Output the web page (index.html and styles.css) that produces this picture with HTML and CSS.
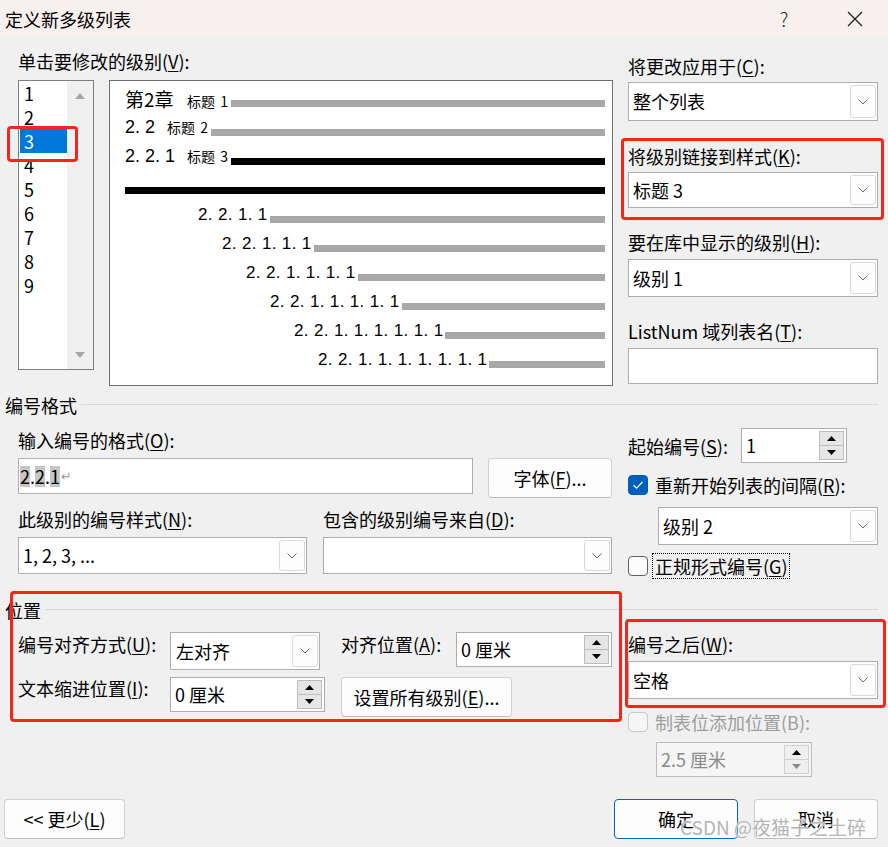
FILE: index.html
```html
<!DOCTYPE html>
<html lang="zh-CN">
<head>
<meta charset="utf-8">
<title>定义新多级列表</title>
<link rel="stylesheet" href="styles.css">
</head>
<body>
<div class="dlg">
  <div class="titlebar">
    <span class="title">定义新多级列表</span>
    <span class="tb-btn help">?</span>
    <span class="tb-btn close"><svg width="16" height="16" viewBox="0 0 16 16"><path d="M1 1 L15 15 M15 1 L1 15" stroke="#1a1a1a" stroke-width="1.2" fill="none"/></svg></span>
  </div>

  <div class="top">
    <div class="col-left">
      <div class="lbl l-top">单击要修改的级别(<u>V</u>):</div>
      <div class="top-row">
        <div class="levels">
          <ul class="lv-items">
            <li>1</li><li>2</li><li class="sel">3</li><li>4</li><li>5</li><li>6</li><li>7</li><li>8</li><li>9</li>
          </ul>
          <div class="lv-scroll">
            <svg class="sc-up" width="10" height="6" viewBox="0 0 10 6"><path d="M0 6 L5 0 L10 6Z" fill="#a6a6a6"/></svg>
            <svg class="sc-down" width="10" height="6" viewBox="0 0 10 6"><path d="M0 0 L5 6 L10 0Z" fill="#a6a6a6"/></svg>
          </div>
        </div>
        <div class="preview">
          <div class="pr"><span class="hn chap">第2章</span><span class="tag">标题 1</span><i class="bar"></i></div>
          <div class="pr"><span class="hn h2">2. 2</span><span class="tag">标题 2</span><i class="bar"></i></div>
          <div class="pr"><span class="hn h3">2. 2. 1</span><span class="tag">标题 3</span><i class="bar dark"></i></div>
          <div class="pr"><i class="bar dark"></i></div>
          <div class="pr ind1"><span class="num">2. 2. 1. 1</span><i class="bar"></i></div>
          <div class="pr ind2"><span class="num">2. 2. 1. 1. 1</span><i class="bar"></i></div>
          <div class="pr ind3"><span class="num">2. 2. 1. 1. 1. 1</span><i class="bar"></i></div>
          <div class="pr ind4"><span class="num">2. 2. 1. 1. 1. 1. 1</span><i class="bar"></i></div>
          <div class="pr ind5"><span class="num">2. 2. 1. 1. 1. 1. 1. 1</span><i class="bar"></i></div>
          <div class="pr ind6"><span class="num">2. 2. 1. 1. 1. 1. 1. 1. 1</span><i class="bar"></i></div>
        </div>
      </div>
    </div>
    <div class="col-right">
      <div class="lbl r1">将更改应用于(<u>C</u>):</div>
      <div class="combo w250 h39 mt5"><span class="val">整个列表</span><span class="drop"><svg width="10" height="6" viewBox="0 0 10 6"><path d="M0.5 0.5 L5 5 L9.5 0.5" fill="none" stroke="#6b6b6b"/></svg></span></div>
      <div class="lbl r2">将级别链接到样式(<u>K</u>):</div>
      <div class="combo w250 h36 mt5"><span class="val">标题 3</span><span class="drop"><svg width="10" height="6" viewBox="0 0 10 6"><path d="M0.5 0.5 L5 5 L9.5 0.5" fill="none" stroke="#6b6b6b"/></svg></span></div>
      <div class="lbl r3">要在库中显示的级别(<u>H</u>):</div>
      <div class="combo w250 h38 mt6"><span class="val">级别 1</span><span class="drop"><svg width="10" height="6" viewBox="0 0 10 6"><path d="M0.5 0.5 L5 5 L9.5 0.5" fill="none" stroke="#6b6b6b"/></svg></span></div>
      <div class="lbl r3">ListNum 域列表名(<u>T</u>):</div>
      <div class="textbox w250 h36 mt6"></div>
    </div>
  </div>

  <div class="sect s1"><span class="sect-t">编号格式</span><i class="sect-line"></i></div>

  <div class="fmt">
    <div class="col-left">
      <div class="lbl f1">输入编号的格式(<u>O</u>):</div>
      <div class="fmt-row">
        <div class="textbox fmt-input"><span class="hl">2</span>.<span class="hl">2</span>.<span class="hl">1</span><span class="ret">↵</span></div>
        <button class="btn font-btn">字体(<u>F</u>)...</button>
      </div>
      <div class="lbl-row">
        <div class="lbl w305">此级别的编号样式(<u>N</u>):</div>
        <div class="lbl">包含的级别编号来自(<u>D</u>):</div>
      </div>
      <div class="combo-row">
        <div class="combo w289 h37"><span class="val">1, 2, 3, ...</span><span class="drop"><svg width="10" height="6" viewBox="0 0 10 6"><path d="M0.5 0.5 L5 5 L9.5 0.5" fill="none" stroke="#6b6b6b"/></svg></span></div>
        <div class="combo w289 h37"><span class="val"></span><span class="drop"><svg width="10" height="6" viewBox="0 0 10 6"><path d="M0.5 0.5 L5 5 L9.5 0.5" fill="none" stroke="#6b6b6b"/></svg></span></div>
      </div>
    </div>
    <div class="col-right">
      <div class="start-row">
        <div class="lbl start-lbl">起始编号(<u>S</u>):</div>
        <div class="spin w106"><span class="val">1</span><span class="sbtns"><span class="sb"><svg width="9" height="5" viewBox="0 0 9 5"><path d="M0 5 L4.5 0 L9 5Z" fill="#000"/></svg></span><span class="sb"><svg width="9" height="5" viewBox="0 0 9 5"><path d="M0 0 L4.5 5 L9 0Z" fill="#000"/></svg></span></span></div>
      </div>
      <div class="chk-row mt12">
        <span class="chk on"><svg width="20" height="20" viewBox="0 0 20 20"><path d="M5.5 10.2 L8.6 13.2 L14.5 7" fill="none" stroke="#fff" stroke-width="1.3"/></svg></span>
        <span class="chk-t">重新开始列表的间隔(<u>R</u>):</span>
      </div>
      <div class="combo h38 w220 restart"><span class="val">级别 2</span><span class="drop"><svg width="10" height="6" viewBox="0 0 10 6"><path d="M0.5 0.5 L5 5 L9.5 0.5" fill="none" stroke="#6b6b6b"/></svg></span></div>
      <div class="chk-row mt11">
        <span class="chk"></span>
        <span class="chk-t focus">正规形式编号(<u>G</u>)</span>
      </div>
    </div>
  </div>

  <div class="sect s2"><span class="sect-t">位置</span><i class="sect-line"></i></div>

  <div class="pos">
    <div class="col-left">
      <div class="pos-row">
        <div class="lbl pl w152">编号对齐方式(<u>U</u>):</div>
        <div class="combo w150 h38"><span class="val val6">左对齐</span><span class="drop"><svg width="10" height="6" viewBox="0 0 10 6"><path d="M0.5 0.5 L5 5 L9.5 0.5" fill="none" stroke="#6b6b6b"/></svg></span></div>
        <div class="lbl pl align-lbl">对齐位置(<u>A</u>):</div>
        <div class="spin w156"><span class="val">0 厘米</span><span class="sbtns"><span class="sb"><svg width="9" height="5" viewBox="0 0 9 5"><path d="M0 5 L4.5 0 L9 5Z" fill="#000"/></svg></span><span class="sb"><svg width="9" height="5" viewBox="0 0 9 5"><path d="M0 0 L4.5 5 L9 0Z" fill="#000"/></svg></span></span></div>
      </div>
      <div class="pos-row mt7">
        <div class="lbl pl2 w152">文本缩进位置(<u>I</u>):</div>
        <div class="spin w155"><span class="val">0 厘米</span><span class="sbtns"><span class="sb"><svg width="9" height="5" viewBox="0 0 9 5"><path d="M0 5 L4.5 0 L9 5Z" fill="#000"/></svg></span><span class="sb"><svg width="9" height="5" viewBox="0 0 9 5"><path d="M0 0 L4.5 5 L9 0Z" fill="#000"/></svg></span></span></div>
        <button class="btn all-btn">设置所有级别(<u>E</u>)...</button>
      </div>
    </div>
    <div class="col-right">
      <div class="lbl after-lbl">编号之后(<u>W</u>):</div>
      <div class="combo w250 h38 mt6"><span class="val">空格</span><span class="drop"><svg width="10" height="6" viewBox="0 0 10 6"><path d="M0.5 0.5 L5 5 L9.5 0.5" fill="none" stroke="#6b6b6b"/></svg></span></div>
      <div class="chk-row mt13">
        <span class="chk dis"></span>
        <span class="chk-t dis-t">制表位添加位置(B):</span>
      </div>
      <div class="spin w156 dis-spin"><span class="val">2.5 厘米</span><span class="sbtns"><span class="sb"><svg width="9" height="5" viewBox="0 0 9 5"><path d="M0 5 L4.5 0 L9 5Z" fill="#000"/></svg></span><span class="sb"><svg width="9" height="5" viewBox="0 0 9 5"><path d="M0 0 L4.5 5 L9 0Z" fill="#8a8a8a"/></svg></span></span></div>
    </div>
  </div>

  <div class="footer">
    <button class="btn less-btn">&lt;&lt; 更少(<u>L</u>)</button>
    <div class="ok-group">
      <button class="btn ok-btn">确定</button>
      <button class="btn cancel-btn">取消</button>
    </div>
  </div>

  <div class="mark m-level"></div>
  <div class="mark m-link"></div>
  <div class="mark m-pos"></div>
  <div class="mark m-after"></div>
  <div class="watermark">CSDN @夜猫子之土碎</div>
</div>
</body>
</html>
```

FILE: styles.css
```css
* { box-sizing: border-box; }
html, body { margin: 0; padding: 0; }
body {
  width: 888px;
  height: 847px;
  overflow: hidden;
  background: #f0f0f0;
  font-family: "Noto Sans CJK SC", "Noto Sans", sans-serif;
  font-size: 18px;
  color: #000;
}
u { text-decoration: underline; text-underline-offset: 2px; text-decoration-thickness: 1px; }
.dlg { position: relative; width: 888px; height: 847px; }

/* title bar */
.titlebar {
  height: 37px;
  background: #f8efef;
  display: flex;
  align-items: center;
  padding: 0 3px 0 5px;
}
.title { font-size: 18px; line-height: 22px; flex: 1; }
.tb-btn { width: 60px; height: 37px; display: flex; align-items: center; justify-content: center; }
.help { font-size: 19px; color: #222; font-weight: 300; margin-right: 11px; }
.close svg { display: block; }

/* common */
.lbl { font-size: 18px; line-height: 22px; height: 22px; white-space: nowrap; flex: none; }
.col-left { width: 595px; flex: none; }
.col-right { width: 250px; margin-left: 15px; display: flex; flex-direction: column; flex: none; }

.combo {
  display: flex;
  align-items: stretch;
  background: #fff;
  border: 1px solid #adadad;
  flex: none;
}
.combo .val { flex: 1; display: flex; align-items: center; padding-left: 4px; padding-bottom: 1px; font-size: 18px; white-space: nowrap; }
.combo .val6 { padding-left: 5px; }
.combo .drop {
  width: 26px;
  margin: 2px 1px 2px 0;
  border: 1px solid #d9d9d9;
  border-radius: 3px;
  background: #fdfdfd;
  display: flex;
  align-items: center;
  justify-content: center;
}
.textbox { background: #fff; border: 1px solid #adadad; flex: none; }

.spin {
  display: flex;
  background: #fff;
  border: 1px solid #adadad;
  height: 35px;
  flex: none;
}
.spin .val { flex: 1; display: flex; align-items: center; padding-left: 4px; padding-bottom: 2px; font-size: 18px; white-space: nowrap; }
.sbtns { width: 25px; margin: 2px 2px 2px 0; display: flex; flex-direction: column; }
.sb {
  flex: 1;
  background: #e6e6e6;
  border: 1px solid #bdbdbd;
  display: flex;
  align-items: center;
  justify-content: center;
}
.sb + .sb { border-top: none; }
.sb svg { display: block; }

.btn {
  font-family: inherit;
  font-size: 18px;
  color: #000;
  background: #fdfdfd;
  border: 1px solid #d0d0d0;
  border-bottom-color: #bcbcbc;
  border-radius: 4px;
  height: 40px;
  padding: 0;
  white-space: nowrap;
  flex: none;
}

/* top area */
.top { display: flex; padding: 0 10px 0 18px; }
.l-top { margin-top: 13px; }
.top-row { display: flex; margin-top: 8px; gap: 15px; align-items: flex-start; }

.levels {
  width: 76px;
  height: 290px;
  border: 1px solid #7f7f7f;
  background: #fff;
  display: flex;
}
.lv-items { list-style: none; margin: 0; padding: 0; width: 48px; }
.lv-items li {
  height: 24px;
  line-height: 24px;
  padding-left: 4px;
  margin-left: 1px;
  font-size: 18px;
}
.lv-items li.sel { background: #0078d7; color: #fff; }
.lv-scroll {
  width: 26px;
  background: #f0f0f0;
  display: flex;
  flex-direction: column;
  align-items: center;
  justify-content: space-between;
  padding: 12px 0 11px;
}
.lv-scroll svg { display: block; }

.preview {
  width: 504px;
  height: 306px;
  border: 1px solid #6e6e6e;
  background: #fff;
  padding: 3px 7px 0 15px;
}
.pr { display: flex; align-items: baseline; height: 29px; line-height: 29px; }
.bar { flex: 1; height: 7px; background: #a8a8a8; align-self: flex-start; margin-top: 16px; }
.bar.dark { background: #000; }
.hn { font-family: "Liberation Sans", "Noto Sans CJK SC", sans-serif; font-size: 18px; flex: none; }
.chap { font-family: "Noto Sans CJK SC", sans-serif; font-size: 19px; width: 62px; }
.h2 { width: 42px; }
.h3 { width: 62px; }
.tag { font-size: 14px; width: 44px; white-space: nowrap; flex: none; word-spacing: 2px; }
.num { font-family: "Liberation Sans", sans-serif; font-size: 17px; letter-spacing: 0.35px; margin-right: 2px; white-space: nowrap; }
.ind1 { padding-left: 73px; }
.ind2 { padding-left: 97px; }
.ind3 { padding-left: 121px; }
.ind4 { padding-left: 145px; }
.ind5 { padding-left: 169px; }
.ind6 { padding-left: 193px; }

.r1 { margin-top: 18px; }
.r2 { margin-top: 24px; }
.r3 { margin-top: 23px; }

/* sections */
.sect { display: flex; align-items: center; padding: 0 10px 0 5px; height: 22px; }
.sect-t { font-size: 18px; line-height: 22px; margin-right: 4px; }
.sect-line { flex: 1; height: 1px; background: #d9d9d9; margin-top: -1px; }
.s1 { margin-top: 8px; }
.s2 { margin-top: 23px; }

/* numbering format */
.fmt { display: flex; padding: 0 10px 0 18px; }
.f1 { margin-top: 13px; }
.fmt-row { display: flex; align-items: flex-start; margin-top: 7px; gap: 15px; }
.fmt-input {
  width: 455px;
  height: 36px;
  display: flex;
  align-items: center;
  padding-left: 1px;
  font-size: 18px;
}
.hl { background: #c6c6c6; line-height: 21px; }
.ret { color: #9a9a9a; font-family: "DejaVu Sans", sans-serif; font-size: 13px; margin-left: 1px; }
.font-btn { width: 124px; }
.lbl-row { display: flex; margin-top: 10px; }
.combo-row { display: flex; gap: 16px; margin-top: 7px; }

.start-row { display: flex; align-items: center; margin-top: 12px; height: 35px; }
.start-lbl { width: 113px; }
.chk-row { display: flex; align-items: center; height: 20px; }
.chk {
  width: 20px;
  height: 20px;
  border: 1px solid #5f5f5f;
  border-radius: 4px;
  background: #fbfbfb;
  flex: none;
}
.chk svg { display: block; margin: -1px; }
.chk.on { background: #005fb8; border-color: #005fb8; }
.chk.dis { border-color: #c9c9c9; background: #f5f5f5; }
.chk-t { margin-left: 7px; font-size: 18px; line-height: 22px; white-space: nowrap; }
.focus { outline: 1px dotted #000; outline-offset: 1px; margin-left: 6px; padding-left: 1px; }
.dis-t { color: #9d9d9d; }
.restart { margin-left: 30px; margin-top: 12px; }

/* position */
.pos { display: flex; padding: 0 10px 0 18px; }
.pos-row { display: flex; align-items: flex-start; }
.pos .col-left .pos-row:first-child { margin-top: 11px; }
.pl { margin-top: 1px; }
.pl2 { margin-top: 0; }
.align-lbl { width: 115px; margin-left: 21px; }
.all-btn { width: 171px; margin-left: 16px; }
.after-lbl { margin-top: 12px; }
.dis-spin { margin-left: 28px; margin-top: 10px; border-color: #bcbcbc; background: #f5f5f5; }
.dis-spin .val { color: #8a8a8a; }
.dis-spin .sb { background: #efefef; border-color: #d0d0d0; }

/* footer */
.footer { display: flex; padding: 0 10px 0 4px; margin-top: 22px; }
.less-btn { width: 121px; }
.ok-group { margin-left: auto; display: flex; gap: 16px; }
.ok-btn { width: 124px; border: 1px solid #0067c0; }
.cancel-btn { width: 124px; }

/* size utilities (kept last so they win) */
.mt5 { margin-top: 5px; }
.mt6 { margin-top: 6px; }
.mt7 { margin-top: 7px; }
.mt11 { margin-top: 11px; }
.mt12 { margin-top: 12px; }
.mt13 { margin-top: 13px; }
.h36 { height: 36px; }
.h37 { height: 37px; }
.h38 { height: 38px; }
.h39 { height: 39px; }
.w106 { width: 106px; }
.w150 { width: 150px; }
.w152 { width: 152px; }
.w155 { width: 155px; }
.w156 { width: 156px; }
.w220 { width: 220px; }
.w250 { width: 250px; }
.w289 { width: 289px; }
.w305 { width: 305px; }

/* annotation overlays */
.mark { position: absolute; border: 3px solid #f8241b; border-radius: 4px; }
.m-level { left: 7px; top: 126px; width: 71px; height: 36px; }
.m-link { left: 621px; top: 138px; width: 263px; height: 82px; }
.m-pos { left: 10px; top: 591px; width: 612px; height: 131px; }
.m-after { left: 625px; top: 619px; width: 261px; height: 89px; }

.watermark {
  position: absolute;
  left: 680px;
  top: 814px;
  font-size: 19px;
  line-height: 26px;
  color: #b4b4b4;
  white-space: nowrap;
  text-shadow: 0 0 1px #fff, 0 0 2px #fff;
}
```
